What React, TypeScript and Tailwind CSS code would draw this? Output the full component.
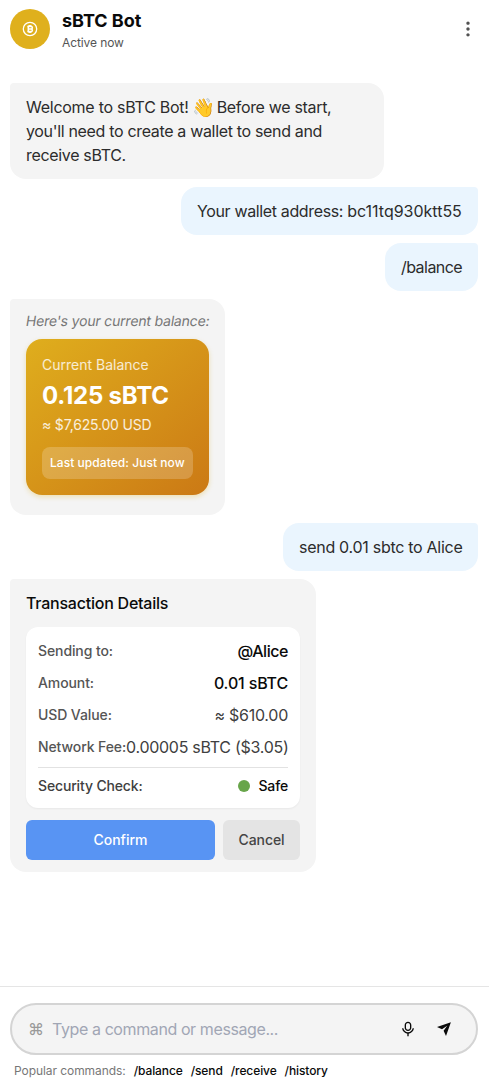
import type { ReactNode } from 'react'
import { RiMicLine, RiMore2Fill } from 'react-icons/ri'

const commands = ['/balance', '/send', '/receive', '/history']

function CoinIcon() {
  return (
    <svg width="16" height="16" viewBox="0 0 16 16" fill="none" stroke="currentColor">
      <circle cx="8" cy="8" r="6.7" strokeWidth="1.3" />
      <path d="M5.3 5.6h3.9a1.2 1.2 0 0 1 0 2.4H6.2M9.2 8a1.2 1.2 0 0 1 0 2.4H5.3M6.3 5.2v5.6M7.2 4v1.5M8.8 4v1.5M7.2 10.5V12M8.8 10.5V12" strokeWidth="1.5" />
    </svg>
  )
}

function SendIcon() {
  return (
    <svg width="16" height="16" viewBox="0 0 16 16" fill="#0a0a0a">
      <path d="M14.9 1.2 1 5.9l5 2.3 5.2-3.5-3.6 5.1L10 15z" />
    </svg>
  )
}

function BotBubble({ className, children }: { className: string; children: ReactNode }) {
  return (
    <div className={`self-start rounded-2xl rounded-tl-[4px] bg-[#f4f4f4] px-4 ${className}`}>
      {children}
    </div>
  )
}

function UserBubble({ className, children }: { className: string; children: ReactNode }) {
  return (
    <div className={`self-end whitespace-nowrap rounded-2xl rounded-tr-[4px] bg-[#eaf5fe] px-4 py-3 text-[#2c2c2c] ${className}`}>
      {children}
    </div>
  )
}

function Header() {
  return (
    <header className="flex h-[59px] items-start gap-3 pl-[10px] pr-[11px] pt-[9px]">
      <div className="flex size-10 items-center justify-center rounded-full bg-[#dfb01d] text-white">
        <CoinIcon />
      </div>
      <div className="flex-1">
        <h1 className="text-[18px] font-bold leading-6 tracking-[-0.03px] text-[#0a0a0a]">sBTC Bot</h1>
        <p className="text-xs leading-5 tracking-[-0.1px] text-[#555]">Active now</p>
      </div>
      <RiMore2Fill size={20} className="mt-[10px] text-[#525252]" />
    </header>
  )
}

function BalanceCard() {
  return (
    <div className="mt-2 flex h-[156px] flex-col rounded-2xl bg-gradient-to-br from-[#dfae1d] to-[#cb7915] p-4 text-white shadow-[0_2px_5px_rgba(223,174,29,0.3)]">
      <p className="text-sm leading-5 text-white/80">Current Balance</p>
      <p className="mt-[5px] text-2xl font-bold leading-8 tracking-[-0.2px]">0.125 sBTC</p>
      <p className="mt-[3px] text-sm leading-5 tracking-[-0.18px] text-white/85">≈ $7,625.00 USD</p>
      <div className="mt-3 flex h-8 items-center whitespace-nowrap rounded-lg bg-white/20 px-2 text-xs font-medium tracking-[0.05px]">
        Last updated: Just now
      </div>
    </div>
  )
}

function DetailRow({ label, children }: { label: string; children: ReactNode }) {
  return (
    <div className="flex h-6 items-center justify-between whitespace-nowrap">
      <span className="text-sm font-medium tracking-[-0.1px] text-[#555]">{label}</span>
      {children}
    </div>
  )
}

function TransactionCard() {
  return (
    <>
      <h2 className="font-medium tracking-[-0.23px] text-[#0a0a0a]">Transaction Details</h2>
      <div className="mt-3 flex h-[181px] flex-col gap-2 rounded-xl bg-white p-3 shadow-[0_1px_2px_rgba(0,0,0,0.05)]">
        <DetailRow label="Sending to:">
          <span className="font-medium tracking-[-0.45px] text-[#0a0a0a]">@Alice</span>
        </DetailRow>
        <DetailRow label="Amount:">
          <span className="font-medium tracking-[-0.15px] text-[#0a0a0a]">0.01 sBTC</span>
        </DetailRow>
        <DetailRow label="USD Value:">
          <span className="tracking-[-0.25px] text-[#404040]">≈ $610.00</span>
        </DetailRow>
        <DetailRow label="Network Fee:">
          <span className="tracking-[-0.28px] text-[#404040]">0.00005 sBTC ($3.05)</span>
        </DetailRow>
        <div className="flex items-center justify-between border-t border-[#e2e2e2] pt-2 text-sm font-medium tracking-[-0.15px]">
          <span className="text-[#404040]">Security Check:</span>
          <span className="flex items-center text-[#0a0a0a]">
            <span className="mr-2 size-3 rounded-full bg-[#68a54a]" />
            Safe
          </span>
        </div>
      </div>
      <div className="mt-3 flex gap-2 text-sm font-medium">
        <button className="h-10 flex-1 rounded-md bg-[#5894f3] text-white">Confirm</button>
        <button className="h-10 w-[77px] rounded-md bg-[#e4e4e4] tracking-[-0.1px] text-[#444]">Cancel</button>
      </div>
    </>
  )
}

function Composer() {
  return (
    <footer className="h-[97px] border-t border-[#e5e5e5] pl-[10px] pr-[11px] pt-4">
      <div className="flex h-[52px] items-center rounded-full border-2 border-[#d4d4d4] bg-[#f4f4f4] pl-4 pr-6">
        <span className="w-6 text-base text-[#999]">⌘</span>
        <input
          className="min-w-0 flex-1 bg-transparent text-base tracking-[-0.4px] placeholder-[#a1a6b4] outline-none"
          placeholder="Type a command or message..."
        />
        <RiMicLine size={16} className="mr-5 text-[#0a0a0a]" />
        <SendIcon />
      </div>
      <div className="mt-2 flex gap-2 pl-1 text-xs leading-4">
        <span className="tracking-[-0.07px] text-[#777]">Popular commands:</span>
        {commands.map((command) => (
          <span key={command} className="font-medium tracking-[-0.1px] text-[#0a0a0a]">
            {command}
          </span>
        ))}
      </div>
    </footer>
  )
}

export default function App() {
  return (
    <div className="flex h-[1083px] w-[489px] flex-col bg-white font-['Inter','Noto_Sans',sans-serif]">
      <Header />
      <main className="flex flex-1 flex-col gap-2 pl-[10px] pr-[11px] pt-6">
        <BotBubble className="w-[374px] py-3 tracking-[-0.33px] text-[#2c2c2c]">
          <span className="tracking-[-0.26px]">Welcome to sBTC Bot!</span>{' '}
          <span className="inline-block h-6 scale-[1.15] align-top">👋</span> Before we start,
          <br />
          you'll need to create a wallet to send and
          <br />
          receive sBTC.
        </BotBubble>
        <UserBubble className="w-[297px]">
          <span className="tracking-[-0.36px]">Your wallet address: </span>
          <span className="tracking-[-0.01px]">bc11tq930ktt55</span>
        </UserBubble>
        <UserBubble className="w-[93px] tracking-[-0.55px]">/balance</UserBubble>
        <BotBubble className="w-[215px] pb-5 pt-3">
          <p className="-skew-x-[9deg] whitespace-nowrap text-sm tracking-[-0.18px] text-[#777]">
            Here's your current balance:
          </p>
          <BalanceCard />
        </BotBubble>
        <UserBubble className="w-[195px] tracking-[-0.28px]">send 0.01 sbtc to Alice</UserBubble>
        <BotBubble className="w-[306px] py-3">
          <TransactionCard />
        </BotBubble>
      </main>
      <Composer />
    </div>
  )
}
